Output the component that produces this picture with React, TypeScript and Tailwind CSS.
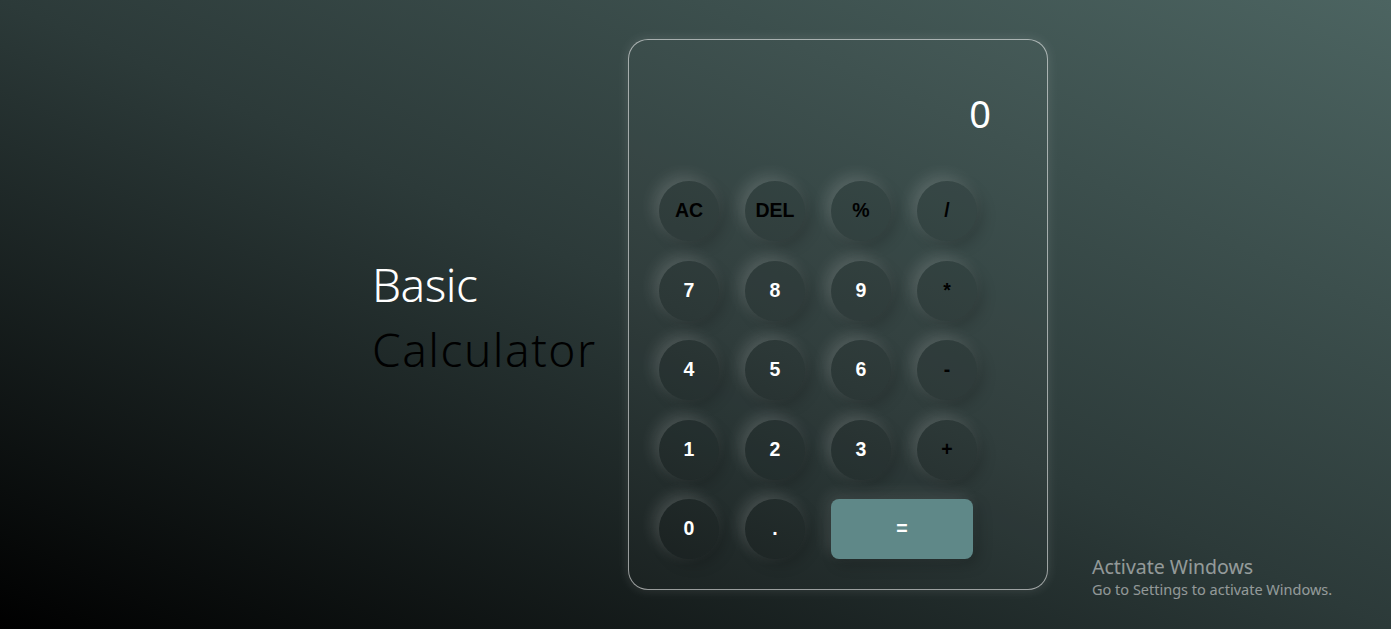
import React from "react";

const keys: { label: string; dark?: boolean; wide?: boolean }[] = [
  { label: "AC", dark: true },
  { label: "DEL", dark: true },
  { label: "%", dark: true },
  { label: "/", dark: true },
  { label: "7" },
  { label: "8" },
  { label: "9" },
  { label: "*", dark: true },
  { label: "4" },
  { label: "5" },
  { label: "6" },
  { label: "-", dark: true },
  { label: "1" },
  { label: "2" },
  { label: "3" },
  { label: "+", dark: true },
  { label: "0" },
  { label: "." },
  { label: "=", wide: true },
];

export default function App() {
  return (
    <div className="relative h-[629px] w-full overflow-hidden bg-[linear-gradient(to_top_right,#000000_0%,#2c3a39_50%,#4c6461_100%)]">
      <div className="flex h-full items-center pl-[372px]">
        <div className="w-[256px] pt-[4px] font-['Noto_Sans',sans-serif] text-[46px] font-light leading-[65px]">
          <div className="tracking-[-0.5px] text-white">Basic</div>
          <div className="tracking-[1.5px] text-black">Calculator</div>
        </div>
        <div className="flex h-[551px] w-[420px] flex-col rounded-[20px] border border-[rgba(255,255,255,0.55)] bg-[rgba(255,255,255,0.02)] px-[30px] shadow-[0_0_12px_rgba(255,255,255,0.12)]">
          <div className="flex h-[141px] items-center justify-end pr-[26px] pt-[6px] font-['Noto_Sans',sans-serif] text-[38px] text-white">
            0
          </div>
          <div className="grid grid-cols-[repeat(4,60px)] gap-x-[26px] gap-y-[19.5px] font-['Liberation_Sans',Arial,sans-serif] text-[19.5px] font-bold">
            {keys.map((k) =>
              k.wide ? (
                <div
                  key={k.label}
                  className="col-span-2 flex h-[60px] w-[142px] items-center justify-center rounded-[8px] bg-[#5f8888] text-white shadow-[-5px_-5px_15px_rgba(255,255,255,0.1),5px_5px_15px_rgba(0,0,0,0.2)]"
                >
                  {k.label}
                </div>
              ) : (
                <div
                  key={k.label}
                  className={`flex h-[60px] w-[60px] items-center justify-center rounded-full bg-[rgba(0,0,0,0.08)] shadow-[-5px_-5px_15px_rgba(255,255,255,0.16),5px_5px_15px_rgba(0,0,0,0.2)] ${
                    k.dark ? "text-black" : "text-white"
                  }`}
                >
                  {k.label}
                </div>
              )
            )}
          </div>
        </div>
      </div>
      <div className="absolute left-[1092px] top-[555px] font-['Noto_Sans',sans-serif] text-[rgba(255,255,255,0.5)]">
        <div className="text-[19.5px] leading-[24px]">Activate Windows</div>
        <div className="text-[14.5px] leading-[21px]">Go to Settings to activate Windows.</div>
      </div>
    </div>
  );
}
